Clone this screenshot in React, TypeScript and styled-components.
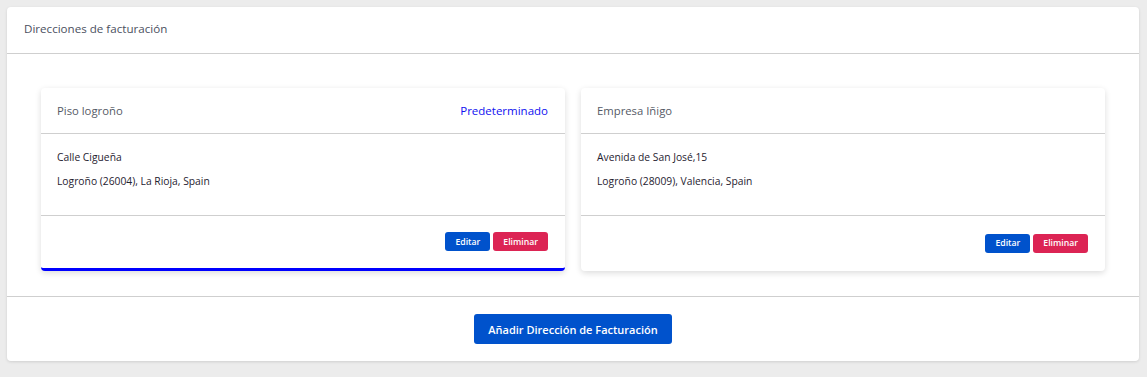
import React from "react";
import styled, { createGlobalStyle } from "styled-components";

const Global = createGlobalStyle`
  html, body { margin: 0; padding: 0; background: #ececec; }
  body { font-family: "Open Sans", "Noto Sans", sans-serif; color: #212529; }
  * { box-sizing: border-box; }
`;

const Page = styled.div`
  padding: 7px 8px 16px 7px;
`;

const Panel = styled.section`
  background: #fff;
  border-radius: 4px;
  box-shadow: 0 1px 3px rgba(0,0,0,0.12);
`;

const PanelHeader = styled.header`
  height: 47px;
  display: flex;
  align-items: center;
  padding: 0 17px 3px;
  border-bottom: 1px solid #cfcfcf;
  font-size: 11.6px;
  color: #4b5060;
`;

const PanelBody = styled.div`
  display: flex;
  gap: 16px;
  padding: 34px 34px 25px;
  border-bottom: 1px solid #cfcfcf;
`;

const Card = styled.article<{ $default?: boolean }>`
  flex: 1;
  display: flex;
  flex-direction: column;
  background: #fff;
  border-radius: 4px;
  box-shadow: 0 2px 6px rgba(0,0,0,0.14);
  border-bottom: ${(p) => (p.$default ? "3px solid #0000ff" : "0")};
`;

const CardHeader = styled.div`
  height: 46px;
  display: flex;
  align-items: center;
  justify-content: space-between;
  padding: 0 17px 1px 16px;
  border-bottom: 1px solid #cfcfcf;
`;

const CardTitle = styled.span`
  font-size: 11.3px;
  color: #555a66;
`;

const DefaultTag = styled.span`
  font-size: 11.5px;
  font-weight: 500;
  color: #1010f0;
`;

const CardBody = styled.div`
  display: grid;
  grid-auto-rows: 24px;
  align-items: center;
  padding: 11px 16px 22px;
  border-bottom: 1px solid #cfcfcf;
  font-size: 10.3px;
  color: #1f2230;
`;

const CardFooter = styled.div`
  flex: 1;
  display: flex;
  align-items: center;
  justify-content: flex-end;
  gap: 3px;
  padding: 16px 17px 17px 16px;
`;

const SmallButton = styled.button<{ $tone: "primary" | "danger" }>`
  height: 19px;
  padding: 0 10px;
  border: 0;
  border-radius: 3px;
  font-family: inherit;
  font-size: 8.7px;
  font-weight: 600;
  color: #fff;
  background: ${(p) => (p.$tone === "primary" ? "#0052cc" : "#dc2454")};
`;

const PanelFooter = styled.footer`
  display: flex;
  justify-content: center;
  padding: 17px;
`;

const AddButton = styled.button`
  height: 30px;
  padding: 0 14px;
  border: 0;
  border-radius: 3px;
  background: #0052cc;
  color: #fff;
  font-family: inherit;
  font-size: 11px;
  font-weight: 600;
`;

type Address = {
  name: string;
  street: string;
  city: string;
  isDefault?: boolean;
};

const addresses: Address[] = [
  { name: "Piso logroño", street: "Calle Cigueña", city: "Logroño (26004), La Rioja, Spain", isDefault: true },
  { name: "Empresa Iñigo", street: "Avenida de San José,15", city: "Logroño (28009), Valencia, Spain" },
];

export default function App() {
  return (
    <>
      <Global />
      <Page>
        <Panel>
          <PanelHeader>Direcciones de facturación</PanelHeader>
          <PanelBody>
            {addresses.map((a) => (
              <Card key={a.name} $default={a.isDefault}>
                <CardHeader>
                  <CardTitle>{a.name}</CardTitle>
                  {a.isDefault && <DefaultTag>Predeterminado</DefaultTag>}
                </CardHeader>
                <CardBody>
                  <span>{a.street}</span>
                  <span>{a.city}</span>
                </CardBody>
                <CardFooter>
                  <SmallButton $tone="primary">Editar</SmallButton>
                  <SmallButton $tone="danger">Eliminar</SmallButton>
                </CardFooter>
              </Card>
            ))}
          </PanelBody>
          <PanelFooter>
            <AddButton>Añadir Dirección de Facturación</AddButton>
          </PanelFooter>
        </Panel>
      </Page>
    </>
  );
}
